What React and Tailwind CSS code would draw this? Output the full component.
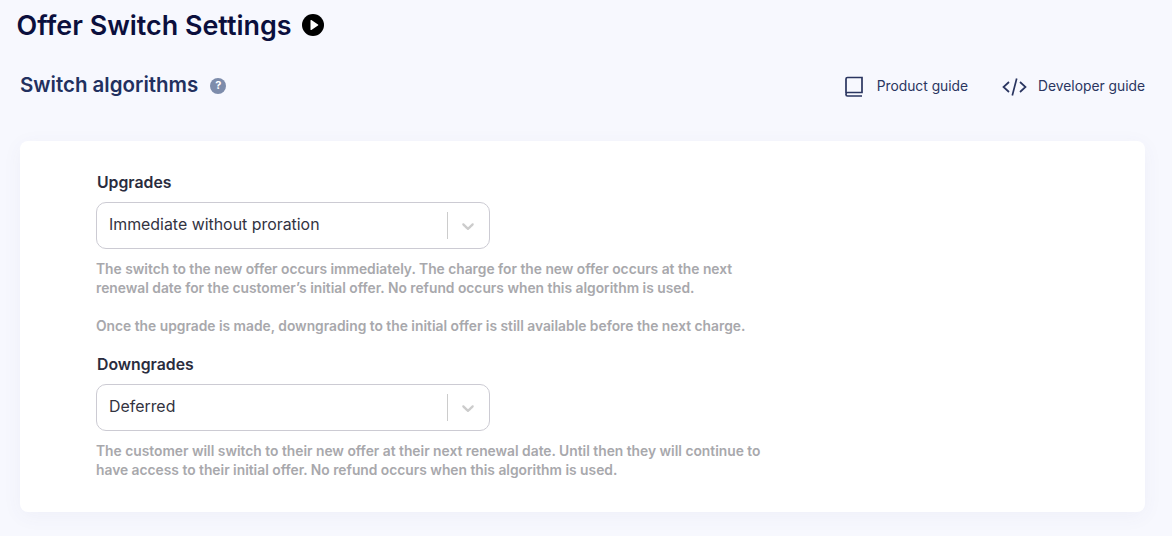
function Select({ value }) {
  return (
    <div className="flex h-[47px] w-[394px] items-center rounded-[10px] border border-[#cccbd3] bg-white">
      <span className="flex-1 pb-[2px] pl-3 text-[15.900px] text-[#33333f]">{value}</span>
      <span className="h-[27px] w-px bg-[#cccccc]" />
      <span className="flex w-[39px] justify-center">
        <svg width="20" height="20" viewBox="0 0 20 20" fill="#cccccc">
          <path d="M4.516 7.548c.436-.446 1.043-.481 1.576 0L10 11.295l3.908-3.747c.533-.481 1.141-.446 1.574 0 .436.445.408 1.197 0 1.615-.406.418-4.695 4.502-4.695 4.502a1.095 1.095 0 0 1-1.576 0S4.924 9.581 4.516 9.163s-.436-1.17 0-1.615z" />
        </svg>
      </span>
      <span className="w-[2px]" />
    </div>
  );
}

function Help({ children, className = "" }) {
  return <p className={`w-[680px] text-[13.8px] leading-[19px] font-semibold text-[#a8a8ac] ${className}`}>{children}</p>;
}

export default function App() {
  return (
    <div className="h-[536px] overflow-hidden bg-[#f7f8fe] font-['Inter',sans-serif]">
      <div className="flex items-center gap-[9.5px] pl-[16.5px] pt-[9px]">
        <h1 className="text-[26.9px] leading-[32px] font-semibold text-[#0b0f3d]">Offer Switch Settings</h1>
        <svg width="24" height="24" viewBox="0 0 24 24">
          <circle cx="12" cy="12" r="11" fill="#000" />
          <path d="M9.5 7.6v8.800a.6.6 0 0 0 .9.5l6.600-4.400a.6.6 0 0 0 0-1L10.400 7.100a.6.6 0 0 0-.9.5z" fill="#fff" />
        </svg>
      </div>
      <div className="flex items-center justify-between pl-5 pr-[27px] pt-[30px]">
        <div className="flex items-center gap-[12px]">
          <h2 className="mb-[2px] text-[20.500px] leading-[28px] font-semibold text-[#22305f]">Switch algorithms</h2>
          <span className="mb-px flex h-[16px] w-[16px] items-center justify-center rounded-full bg-[#7d8cab] text-[11px] font-bold text-white">?</span>
        </div>
        <div className="mt-[1px] flex items-center text-[13.800px] text-[#2a3560]">
          <svg className="mr-[13px]" width="20" height="22" viewBox="0 0 20 22" fill="none" stroke="#2a3560" strokeWidth="1.7">
            <path d="M2 17V3a1.500 1.500 0 0 1 1.500-1.500H18V16.500H3.500A1.500 1.500 0 0 0 2 18v.5A1.500 1.500 0 0 0 3.500 20H18" />
          </svg>
          <span>Product guide</span>
          <svg className="ml-[34px] mr-[11px]" width="25" height="20" viewBox="0 0 25 20" fill="none" stroke="#2a3560" strokeWidth="1.7">
            <path d="M7 5l-5.500 5L7 15M18 5l5.500 5L18 15M14.700 1.500l-4.400 17" />
          </svg>
          <span>Developer guide</span>
        </div>
      </div>
      <div className="ml-5 mr-[27px] mt-[40px] h-[371px] rounded-lg bg-white pl-[76px] pt-[32px] shadow-[0_4px_20px_rgba(70,80,140,0.05)]">
        <div className="pl-px text-[15.800px] leading-[20px] font-semibold text-[#2a2c3e]">Upgrades</div>
        <div className="mt-[9px]"><Select value="Immediate without proration" /></div>
        <Help className="mt-[11px]">The switch to the new offer occurs immediately. The charge for the new offer occurs at the next renewal date for the customer’s initial offer. No refund occurs when this algorithm is used.</Help>
        <Help className="mt-[19px]">Once the upgrade is made, downgrading to the initial offer is still available before the next charge.</Help>
        <div className="mt-[19px] pl-px text-[15.800px] leading-[20px] font-semibold text-[#2a2c3e]">Downgrades</div>
        <div className="mt-[9px]"><Select value="Deferred" /></div>
        <Help className="mt-[11px]">The customer will switch to their new offer at their next renewal date. Until then they will continue to have access to their initial offer. No refund occurs when this algorithm is used.</Help>
      </div>
    </div>
  );
}
